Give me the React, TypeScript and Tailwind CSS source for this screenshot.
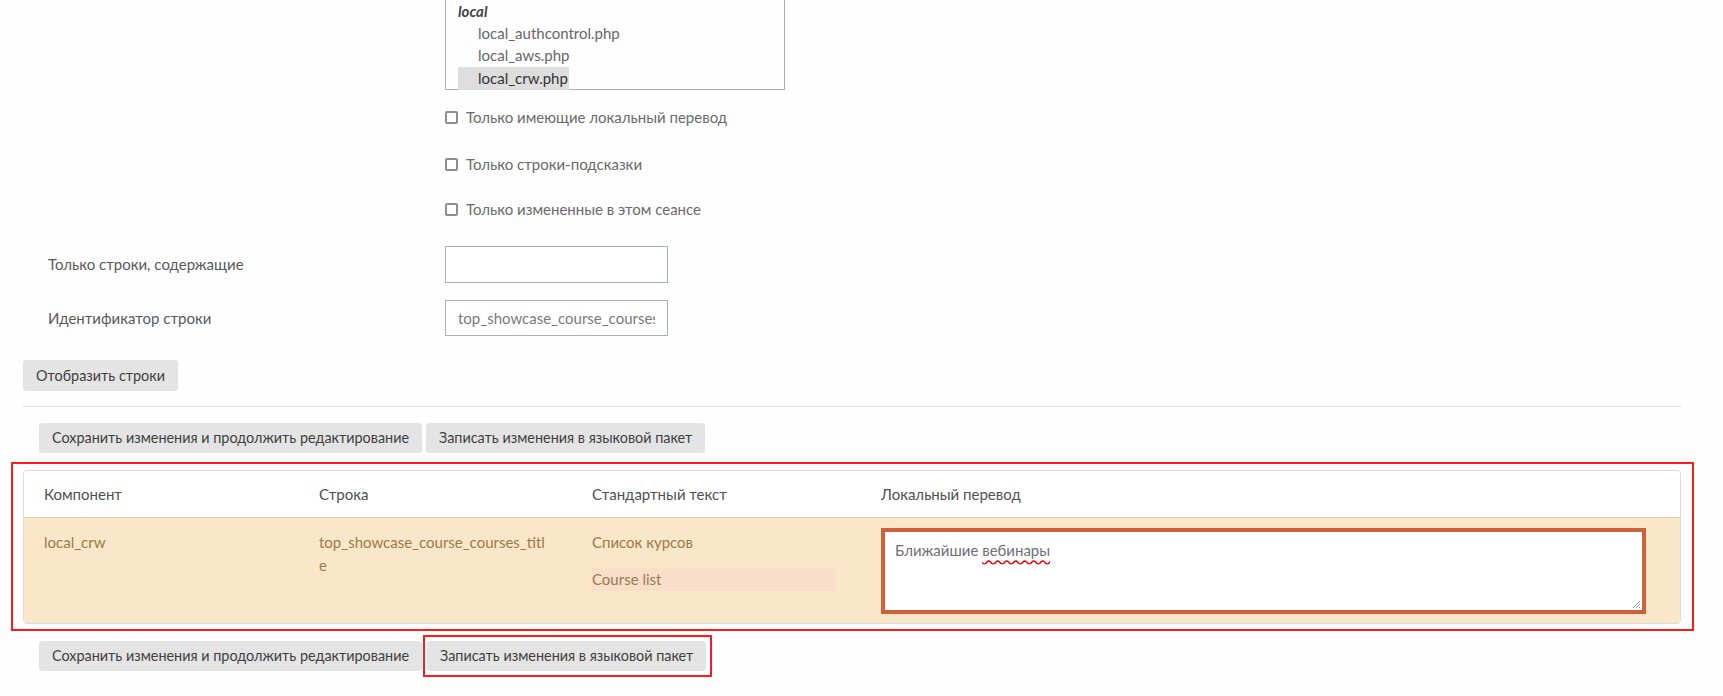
import React from 'react';

const font = "font-['Lato','Liberation_Sans',sans-serif]";

const Checkbox: React.FC<{ label: string; className?: string }> = ({ label, className }) => (
    <div className={`flex items-center h-[20px] ${className ?? ''}`}>
        <span className="inline-block w-[13px] h-[13px] border-[2px] border-[#8d8d93] rounded-[2px] bg-white" />
        <span className="ml-[8px] text-[15px] text-[#6a6a6a]">{label}</span>
    </div>
);

const Btn: React.FC<{ children: React.ReactNode; className?: string }> = ({ children, className }) => (
    <button className={`h-[30px] px-[13px] bg-[#e4e4e4] rounded-[3px] text-[14.4px] text-[#3f3f3f] whitespace-nowrap ${className ?? ''}`}>
        {children}
    </button>
);

const ResizeGrip: React.FC = () => (
    <svg className="absolute right-[1px] bottom-[1px]" width="10" height="10" viewBox="0 0 10 10">
        <path d="M9 2 L2 9 M9 5 L5 9 M9 8 L8 9" stroke="#9a9a9a" strokeWidth="1" />
    </svg>
);

const App: React.FC = () => {
    return (
        <div className={`w-[1723px] h-[696px] bg-[#fefefe] overflow-hidden ${font}`}>
            {/* file list */}
            <div className="ml-[445px] w-[340px] h-[90px] border-x border-b border-[#a9afb9] pl-[12px] text-[15px]">
                <div className="h-[22px] leading-[22px] font-bold italic text-[#444]">local</div>
                <div className="h-[22px] leading-[22px] pl-[20px] text-[#666]">local_authcontrol.php</div>
                <div className="h-[23px] leading-[23px] pl-[20px] text-[#666]">local_aws.php</div>
                <div className="h-[23px] leading-[23px] pl-[20px] pr-[1px] text-[#333] bg-[#dedede] w-fit">local_crw.php</div>
            </div>

            <div className="ml-[445px]">
                <Checkbox className="mt-[17px]" label="Только имеющие локальный перевод" />
                <Checkbox className="mt-[27px]" label="Только строки-подсказки" />
                <Checkbox className="mt-[25px]" label="Только измененные в этом сеансе" />
            </div>

            <div className="mt-[27px] flex items-center">
                <span className="w-[445px] pl-[48px] text-[15px] text-[#5a5a5a]">Только строки, содержащие</span>
                <div className="w-[223px] h-[37px] border border-[#a9afb9] bg-white" />
            </div>
            <div className="mt-[17px] flex items-center">
                <span className="w-[445px] pl-[48px] text-[15px] text-[#5a5a5a]">Идентификатор строки</span>
                <input
                    readOnly
                    value="top_showcase_course_courses_title"
                    className="w-[223px] h-[36px] border border-[#a9afb9] bg-white px-[12px] text-[15px] text-[#7a7a7a] outline-none"
                />
            </div>

            <div className="mt-[24px] ml-[23px]">
                <Btn className="h-[31px]">Отобразить строки</Btn>
            </div>

            <div className="mt-[15px] ml-[23px] w-[1658px] h-px bg-[#dedede]" />

            <div className="mt-[16px] ml-[39px] flex gap-[4px]">
                <Btn>Сохранить изменения и продолжить редактирование</Btn>
                <Btn>Записать изменения в языковой пакет</Btn>
            </div>

            {/* highlighted table */}
            <div className="mt-[9px] ml-[11px] w-[1683px] h-[169px] border-[2px] border-[#ff1a1a] pt-[6px] pl-[10px]">
                <div className="w-[1658px] border border-[#dcdcdc] rounded-[4px] overflow-hidden">
                    <div className="grid grid-cols-[275px_273px_290px_1fr] h-[46px] items-center bg-white text-[15px] text-[#505050]">
                        <div className="pl-[20px]">Компонент</div>
                        <div className="pl-[20px]">Строка</div>
                        <div className="pl-[20px]">Стандартный текст</div>
                        <div className="pl-[19px]">Локальный перевод</div>
                    </div>
                    <div className="grid grid-cols-[275px_273px_290px_1fr] h-[106px] bg-[#fae6c9] border-t border-[#e3cfa8] text-[15px] text-[#9a7a4c] leading-[23px]">
                        <div className="pl-[20px] pt-[13px]">local_crw</div>
                        <div className="pl-[20px] pt-[13px]">
                            top_showcase_course_courses_titl
                            <br />e
                        </div>
                        <div className="pl-[20px] pr-[26px] pt-[13px]">
                            <div>Список курсов</div>
                            <div className="mt-[14px] h-[23px] bg-[#f9dfca]">Course list</div>
                        </div>
                        <div className="pl-[19px] pr-[34px] pt-[10px]">
                            <div className="relative h-[86px] border-[4px] border-[#cf6139] bg-white pl-[10px] pt-[7px] text-[#707070]">
                                Ближайшие{' '}
                                <span className="underline decoration-wavy decoration-[#e00] underline-offset-[3px]">вебинары</span>
                                <ResizeGrip />
                            </div>
                        </div>
                    </div>
                </div>
            </div>

            <div className="mt-[10px] ml-[39px] flex gap-[5px]">
                <Btn>Сохранить изменения и продолжить редактирование</Btn>
                <div className="relative">
                    <Btn>Записать изменения в языковой пакет</Btn>
                    <div className="absolute -left-[4px] -right-[6px] -top-[6px] -bottom-[6px] border-[2px] border-[#ff1a1a]" />
                </div>
            </div>
        </div>
    );
};

export default App;
